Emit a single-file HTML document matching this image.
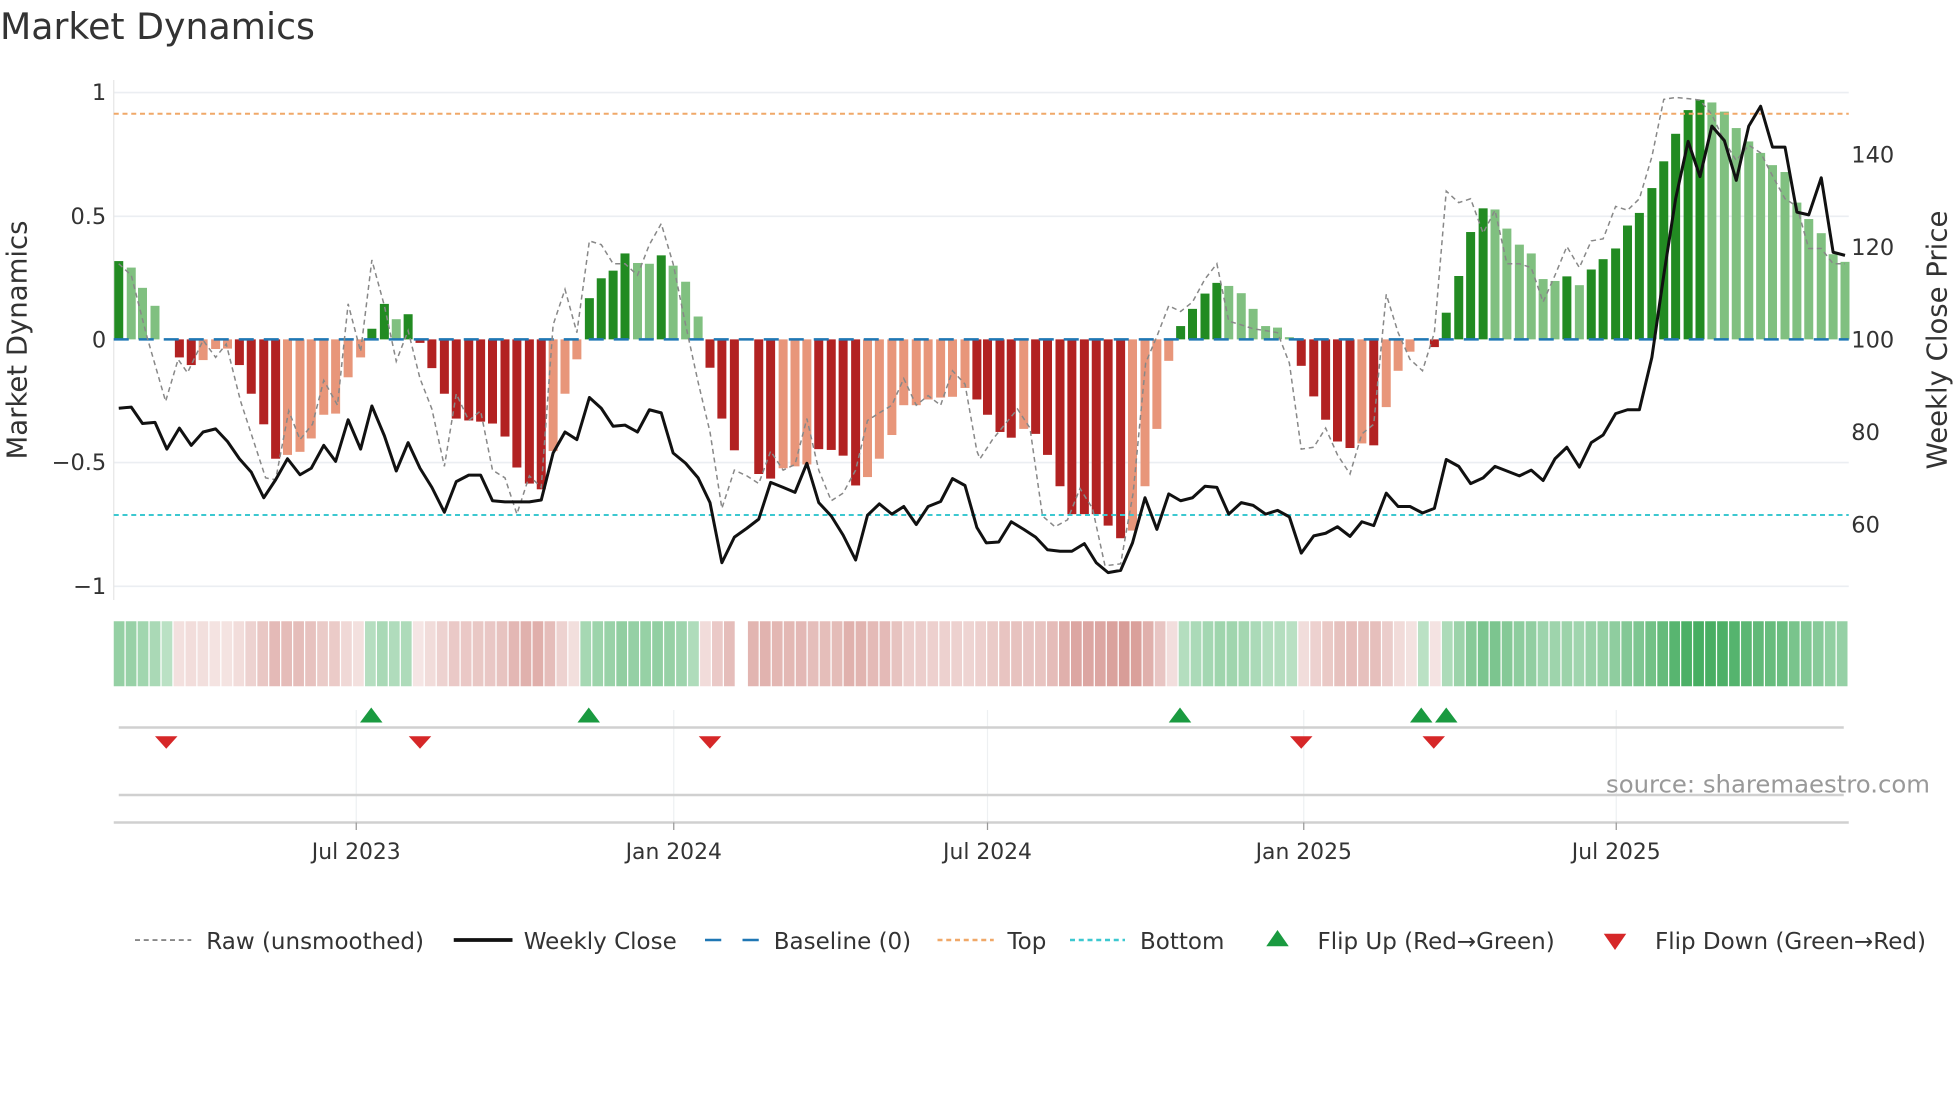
<!DOCTYPE html>
<html><head><meta charset="utf-8"><style>
html,body{margin:0;padding:0;background:#fff;width:1960px;height:1102px;overflow:hidden}
svg{display:block;font-family:"DejaVu Sans","Liberation Sans",sans-serif}
</style></head><body>
<svg id="s" width="1960" height="1102" viewBox="0 0 1568 881.6" xmlns="http://www.w3.org/2000/svg">
<rect width="1568" height="882" fill="#fff"/>
<text x="0" y="31" font-size="29" fill="#333">Market Dynamics</text>
<g stroke="#ebeef2" stroke-width="1.3">
<line x1="91" x2="1479" y1="74" y2="74"/><line x1="91" x2="1479" y1="173" y2="173"/>
<line x1="91" x2="1479" y1="370" y2="370"/><line x1="91" x2="1479" y1="469" y2="469"/>
</g>
<line x1="91" x2="91" y1="64" y2="480" stroke="#e6e6e6" stroke-width="1"/>
<g font-size="18" fill="#333" text-anchor="end">
<text x="85" y="80">1</text><text x="85" y="179">0.5</text><text x="85" y="278">0</text>
<text x="85" y="376">−0.5</text><text x="85" y="475">−1</text>
</g>
<g font-size="18" fill="#333">
<text x="1481" y="130">140</text><text x="1481" y="204">120</text><text x="1481" y="278">100</text>
<text x="1481" y="352">80</text><text x="1481" y="426">60</text>
</g>
<text transform="translate(21,272) rotate(-90)" font-size="22" fill="#333" text-anchor="middle">Market Dynamics</text>
<text transform="translate(1557,272) rotate(-90)" font-size="22" fill="#333" text-anchor="middle">Weekly Close Price</text>
<g id="bars"></g>
<line x1="91" x2="1479" y1="91" y2="91" stroke="#f0a868" stroke-width="1.6" stroke-dasharray="4,3"/>
<line x1="91" x2="1479" y1="412" y2="412" stroke="#3cc8d0" stroke-width="1.6" stroke-dasharray="4,3"/>
<line x1="91" x2="1479" y1="271.5" y2="271.5" stroke="#1f77b4" stroke-width="2" stroke-dasharray="12,8"/>
<polyline id="raw" fill="none" stroke="#888" stroke-width="1.2" stroke-dasharray="4,3"/>
<polyline id="px" fill="none" stroke="#111" stroke-width="2.4" stroke-linejoin="round"/>
<g id="heat"></g>
<g stroke="#eef0f2" stroke-width="1">
<line x1="285" x2="285" y1="568" y2="658"/><line x1="539" x2="539" y1="568" y2="658"/>
<line x1="790" x2="790" y1="568" y2="658"/><line x1="1043" x2="1043" y1="568" y2="658"/>
<line x1="1293" x2="1293" y1="568" y2="658"/>
</g>
<line x1="95" x2="1475" y1="582" y2="582" stroke="#d0d0d0" stroke-width="2"/>
<line x1="95" x2="1475" y1="636" y2="636" stroke="#d0d0d0" stroke-width="2"/>
<line x1="91" x2="1479" y1="658" y2="658" stroke="#d0d0d0" stroke-width="2"/>
<g stroke="#999" stroke-width="1">
<line x1="285" x2="285" y1="658" y2="664"/><line x1="539" x2="539" y1="658" y2="664"/>
<line x1="790" x2="790" y1="658" y2="664"/><line x1="1043" x2="1043" y1="658" y2="664"/>
<line x1="1293" x2="1293" y1="658" y2="664"/>
</g>
<g id="mk"></g>
<g font-size="17.5" fill="#333" text-anchor="middle">
<text x="285" y="687">Jul 2023</text><text x="539" y="687">Jan 2024</text>
<text x="790" y="687">Jul 2024</text><text x="1043" y="687">Jan 2025</text>
<text x="1293" y="687">Jul 2025</text>
</g>
<text x="1544" y="634" font-size="19.5" fill="#999" text-anchor="end">source: sharemaestro.com</text>
<g font-size="18.4" fill="#333">
<line x1="108" x2="153" y1="752" y2="752" stroke="#888" stroke-width="1.5" stroke-dasharray="4,3"/>
<text x="165" y="759">Raw (unsmoothed)</text>
<line x1="363" x2="410" y1="752" y2="752" stroke="#111" stroke-width="3"/>
<text x="419" y="759">Weekly Close</text>
<line x1="564" x2="608" y1="752" y2="752" stroke="#1f77b4" stroke-width="2" stroke-dasharray="13,17"/>
<text x="619" y="759">Baseline (0)</text>
<line x1="750" x2="795" y1="752" y2="752" stroke="#f0a868" stroke-width="2" stroke-dasharray="4,3"/>
<text x="806" y="759">Top</text>
<line x1="856" x2="900" y1="752" y2="752" stroke="#3cc8d0" stroke-width="2" stroke-dasharray="4,3"/>
<text x="912" y="759">Bottom</text>
<polygon points="1022,744 1013,757 1031,757" fill="#1a9a40"/>
<text x="1054" y="759">Flip Up (Red→Green)</text>
<polygon points="1283,747 1301,747 1292,760" fill="#d62728"/>
<text x="1324" y="759">Flip Down (Green→Red)</text>
</g>
</svg>
<script>
var NS="http://www.w3.org/2000/svg";
function el(p,t,a){var e=document.createElementNS(NS,t);for(var k in a)e.setAttribute(k,a[k]);p.appendChild(e);return e;}
var B1=[[190,683,1],[210,700,0],[228,753,0],[248,800,0],[287,935,1],[306,955,1],[325,942,0],[345,913,0],[364,912,0],[383,955,1],[402,1030,1],[422,1110,1],[441,1200,1],[460,1190,0],[480,1182,0],[498,1147,0],[518,1085,0],[537,1082,0],[557,987,0],[577,935,0],[595,860,1],[615,795,1],[634,835,0],[653,822,1],[672,897,1],[691,963,1],[711,1030,1],[730,1095,1],[750,1100,1],[769,1103,1],[788,1108,1],[808,1142,1],[827,1223,1],[847,1265,1],[866,1280,1],[885,1180,0],[904,1030,0],[923,940,0],[943,780,1],[962,728,1],[981,708,1],[1000,663,1],[1020,688,0],[1039,690,0],[1058,668,1],[1077,695,0],[1097,737,0],[1117,828,0],[1136,962,1],[1155,1095,1],[1175,1178,1],[1214,1240,1],[1233,1252,1],[1253,1225,0],[1272,1220,0],[1291,1215,0],[1310,1175,1],[1330,1177,1],[1349,1192,1],[1369,1270,1],[1388,1248,0],[1407,1200,0],[1427,1138,0],[1446,1060,0],[1466,1060,0],[1485,1045,0],[1505,1040,0],[1524,1038,0],[1544,1015,0],[1563,1045,1]];
var B2=[[12,1085,1],[32,1130,1],[50,1145,1],[70,1122,0],[89,1135,1],[108,1190,1],[128,1272,1],[147,1345,1],[167,1345,1],[186,1345,1],[205,1375,1],[225,1408,1],[244,1388,0],[264,1272,0],[283,1122,0],[302,944,0],[321,853,1],[340,808,1],[360,768,1],[379,740,1],[398,748,0],[418,767,0],[437,808,0],[457,853,0],[476,857,0],[495,882,0],[514,957,1],[534,1037,1],[553,1098,1],[572,1155,1],[592,1172,1],[611,1160,0],[630,1165,1],[650,1065,0],[669,970,0],[688,920,0],[727,908,1],[746,818,1],[766,722,1],[785,607,1],[805,545,1],[824,548,0],[843,598,0],[863,640,0],[882,663,0],[901,730,0],[920,735,0],[939,723,1],[959,746,0],[978,705,1],[997,678,1],[1017,650,1],[1036,590,1],[1055,557,1],[1075,492,1],[1094,422,1],[1113,350,1],[1133,288,1],[1152,261,1],[1171,268,0],[1191,292,0],[1210,335,0],[1230,370,0],[1249,400,0],[1268,432,0],[1288,450,0],[1307,530,0],[1326,573,0],[1346,610,0],[1365,665,0],[1384,685,0]];
var bars=[];
B1.forEach(function(b){bars.push([b[0]/2,b[1]/3.27,b[2]]);});
B2.forEach(function(b){bars.push([784+b[0]/2,b[1]/3.27,b[2]]);});
var g=document.getElementById("bars");
bars.forEach(function(b){var y=b[1],z=271.5,pos=y<z;
 var c=pos?(b[2]?"#228b22":"#80c080"):(b[2]?"#b22222":"#e8967a");
 el(g,"rect",{x:b[0]-3.6,y:Math.min(y,z),width:7.2,height:Math.max(Math.abs(z-y),0.8),fill:c});});
var h=document.getElementById("heat");
var xs=[];for(var i=0;i<145;i++)xs.push(91+i*(1388/145));
function near(x){var best=null,d=99;bars.forEach(function(b){var dd=Math.abs(b[0]-x);if(dd<d){d=dd;best=b;}});return d<5?best:null;}
for(var i=0;i<145;i++){var cx=xs[i]+4.8;var b=near(cx);
 if(!b){ if(cx>592&&cx<602) continue; b=[cx,271.5,0];}
 var v=(271.5-b[1])/197.5,c;
 if(v>=0){var t=0.35+0.6*Math.min(v,1);c="rgb("+Math.round(255-t*(255-58))+","+Math.round(255-t*(255-168))+","+Math.round(255-t*(255-87))+")";}
 else{var t=0.15+0.55*Math.min(-v,1);c="rgb("+Math.round(255-t*(255-190))+","+Math.round(255-t*(255-90))+","+Math.round(255-t*(255-82))+")";}
 el(h,"rect",{x:xs[i],y:497,width:1388/145-1,height:52,fill:c});}
var P1=[[190,1068],[210,1065],[228,1108],[248,1105],[267,1175],[287,1120],[306,1165],[325,1130],[345,1122],[364,1155],[383,1200],[402,1235],[422,1302],[441,1255],[460,1200],[480,1242],[498,1225],[518,1165],[537,1207],[557,1098],[577,1175],[595,1062],[615,1140],[634,1232],[653,1158],[672,1225],[691,1275],[711,1340],[730,1260],[750,1243],[769,1243],[788,1310],[808,1313],[827,1313],[847,1313],[866,1308],[885,1185],[904,1130],[923,1150],[943,1040],[962,1068],[981,1115],[1000,1112],[1020,1130],[1039,1072],[1058,1080],[1077,1185],[1097,1212],[1117,1250],[1136,1315],[1155,1472],[1175,1405],[1195,1382],[1214,1358],[1233,1262],[1253,1275],[1272,1288],[1291,1212],[1310,1315],[1330,1350],[1349,1400],[1369,1465],[1388,1348],[1407,1318],[1427,1345],[1446,1325],[1466,1372],[1485,1325],[1505,1312],[1524,1252],[1544,1270],[1563,1380]];
var P2=[[10,1420],[30,1418],[50,1365],[70,1385],[89,1405],[108,1438],[128,1442],[147,1442],[167,1422],[186,1472],[205,1498],[225,1492],[244,1420],[264,1302],[283,1385],[302,1292],[321,1310],[340,1302],[360,1272],[379,1275],[398,1345],[418,1315],[437,1322],[457,1345],[476,1335],[495,1352],[514,1447],[534,1402],[553,1395],[572,1378],[592,1403],[611,1365],[630,1375],[650,1290],[669,1325],[688,1325],[708,1342],[727,1330],[746,1202],[766,1220],[785,1265],[805,1250],[824,1220],[843,1232],[863,1245],[882,1230],[901,1257],[920,1200],[939,1170],[959,1222],[978,1158],[997,1138],[1017,1082],[1036,1072],[1055,1072],[1075,935],[1094,720],[1113,520],[1133,370],[1152,462],[1171,330],[1191,368],[1210,472],[1230,330],[1249,278],[1268,385],[1288,385],[1307,555],[1326,562],[1346,465],[1365,660],[1384,668]];
var R1=[[190,690],[210,720],[235,880],[265,1050],[285,940],[300,975],[325,890],[345,935],[362,900],[385,1050],[405,1150],[425,1250],[441,1255],[462,1075],[480,1150],[500,1110],[518,995],[540,1060],[557,795],[577,920],[595,680],[615,800],[634,945],[653,865],[672,990],[691,1070],[711,1220],[730,1030],[750,1100],[769,1075],[788,1230],[808,1250],[827,1345],[847,1245],[866,1275],[885,850],[904,757],[923,870],[943,630],[962,640],[981,690],[1000,690],[1020,720],[1039,640],[1058,585],[1077,690],[1097,850],[1117,1000],[1136,1130],[1155,1330],[1175,1230],[1195,1245],[1214,1265],[1233,1180],[1253,1230],[1272,1215],[1291,1095],[1310,1230],[1330,1310],[1349,1290],[1369,1230],[1388,1100],[1407,1080],[1427,1060],[1446,990],[1466,1060],[1485,1035],[1505,1060],[1524,970],[1544,1005],[1563,1180]];
var R2=[[0,1200],[20,1150],[40,1110],[60,1070],[80,1120],[100,1350],[120,1378],[140,1360],[160,1278],[180,1330],[200,1480],[225,1475],[245,1290],[265,950],[283,880],[302,800],[321,815],[340,790],[360,730],[379,690],[398,840],[418,850],[437,860],[457,865],[476,870],[495,950],[514,1175],[534,1170],[553,1120],[572,1190],[592,1240],[611,1135],[630,1110],[650,770],[669,870],[688,940],[708,970],[727,870],[746,500],[766,530],[785,520],[805,610],[824,550],[843,690],[863,690],[882,700],[901,790],[920,720],[939,645],[959,700],[978,630],[997,625],[1017,540],[1036,550],[1055,520],[1075,410],[1094,260],[1113,255],[1133,258],[1152,262],[1171,300],[1191,370],[1210,420],[1230,380],[1249,400],[1268,460],[1288,520],[1307,540],[1326,650],[1346,650],[1365,690],[1384,690]];
function pts(a,b){var s=[];a.forEach(function(p){s.push((p[0]/2).toFixed(1)+","+(p[1]/3.27).toFixed(1));});b.forEach(function(p){s.push((784+p[0]/2).toFixed(1)+","+(p[1]/3.27).toFixed(1));});return s.join(" ");}
document.getElementById("px").setAttribute("points",pts(P1,P2));
document.getElementById("raw").setAttribute("points",pts(R1,R2));
var m=document.getElementById("mk");
[297,471,944,1137,1157].forEach(function(x){el(m,"polygon",{points:(x)+",566 "+(x-9)+",578 "+(x+9)+",578",fill:"#1a9a40"});});
[133,336,568,1041,1147].forEach(function(x){el(m,"polygon",{points:(x-9)+",589 "+(x+9)+",589 "+x+",599",fill:"#d62728"});});
</script>
</body></html>
